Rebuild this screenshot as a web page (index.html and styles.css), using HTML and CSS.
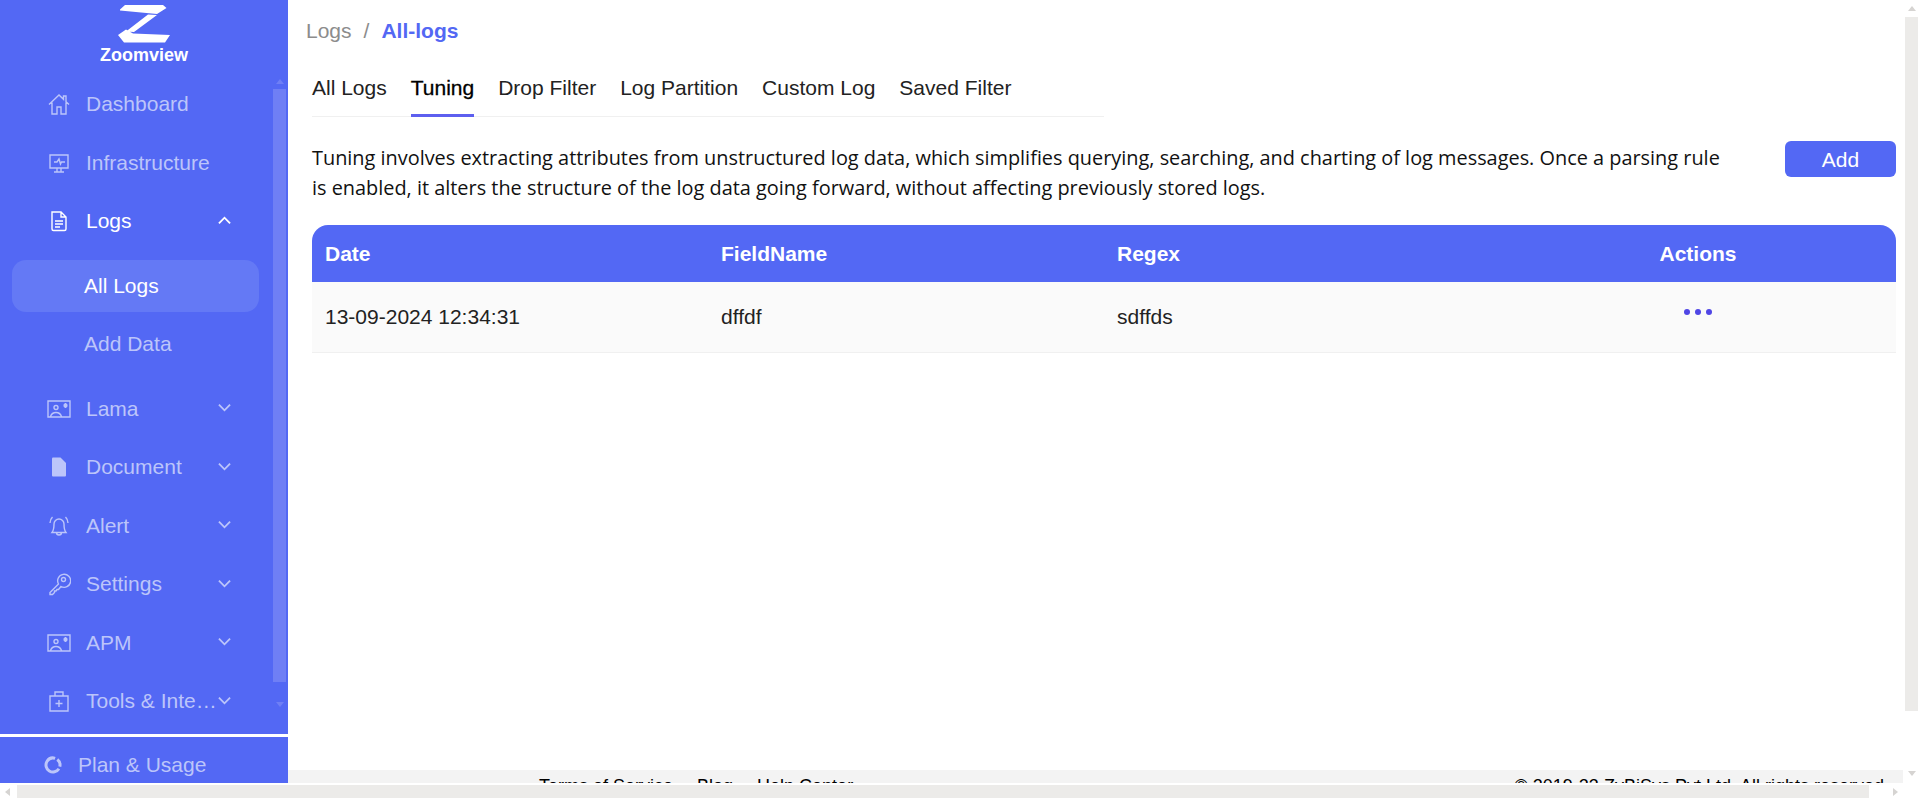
FILE: index.html
```html
<!DOCTYPE html>
<html lang="en">
<head>
  <meta charset="UTF-8">
  <meta name="viewport" content="width=device-width, initial-scale=1.0">
  <link rel="stylesheet" href="styles.css">
  <title>Zoomview - Logs</title>
</head>
<body>
  <div class="window">
    <div class="page">
      <aside class="sidebar">
        <div class="logo">
          <svg class="logo-mark" width="52" height="39" viewBox="118 4 52 39"><path d="M120 9.500L125 5H163L166.500 8L157 14L120 10.500Z M148 14.500L157 15L134 32L126 31.500Z M118 35L126 29.500L133 33.500L170 35L165 42.500H124Z" fill="#fff"/></svg>
          <span class="logo-name">Zoomview</span>
        </div>
        <div class="menu-wrap">
          <nav class="menu">
            <a class="menu-item"><svg class="menu-icon" viewBox="0 0 24 24"><path d="M2 12.500L12 3l4.500 4.300V4H19v5.700l3 2.800M5 10.500V22h5v-7h4v7h5V10.500"/></svg><span class="menu-label">Dashboard</span></a>
            <a class="menu-item"><svg class="menu-icon" viewBox="0 0 24 24"><path d="M3 4h18v13H3zM7 11h3l2-3 1.500 5 1-2H18M10 17v4M14 17v4M7 21h10"/></svg><span class="menu-label">Infrastructure</span></a>
            <a class="menu-item open"><svg class="menu-icon" viewBox="0 0 24 24"><path d="M5 3h9l5 5v12a1.500 1.500 0 0 1-1.500 1.500h-11A1.500 1.500 0 0 1 5 20zM14 3v5h5M8 12h8M8 15h8M8 18h5"/></svg><span class="menu-label">Logs</span><svg class="chevron" viewBox="0 0 14 14"><path d="M1 10l6-6 6 6"/></svg></a>
            <a class="sub-item current">All Logs</a>
            <a class="sub-item">Add Data</a>
            <a class="menu-item gap"><svg class="menu-icon" viewBox="0 0 24 24"><path d="M1 4h22v16H1zM3.500 19.500c1-3 3-4 5.500-4s4.500 1 5.500 4M17 7l3 3M20 7l-3 3M18.500 6v5M16.500 8.500h4"/><circle cx="9" cy="10.500" r="2"/></svg><span class="menu-label">Lama</span><svg class="chevron" viewBox="0 0 14 14"><path d="M1 4l6 6 6-6"/></svg></a>
            <a class="menu-item"><svg class="menu-icon solid" viewBox="0 0 24 24"><path d="M6 2.500h7.500L19 8v12.500a1 1 0 0 1-1 1H6a1 1 0 0 1-1-1v-17a1 1 0 0 1 1-1z"/></svg><span class="menu-label">Document</span><svg class="chevron" viewBox="0 0 14 14"><path d="M1 4l6 6 6-6"/></svg></a>
            <a class="menu-item"><svg class="menu-icon" viewBox="0 0 24 24"><path d="M5 18.500c2-2.500 2-5 2-8.500a5 5 0 0 1 10 0c0 3.500 0 6 2 8.500zM9.500 18.500a2.500 2.500 0 0 0 5 0M3 9c0-2.500 1-4.500 2.500-6M21 9c0-2.500-1-4.500-2.500-6"/></svg><span class="menu-label">Alert</span><svg class="chevron" viewBox="0 0 14 14"><path d="M1 4l6 6 6-6"/></svg></a>
            <a class="menu-item"><svg class="menu-icon" viewBox="0 0 24 24"><path d="M11.500 12L3 20.500V22.500H5.500L7.500 20.500V19H9L10 17.500H11.500L14 14.500A6.500 6.500 0 1 0 11.500 12Z"/><circle cx="16.500" cy="7.500" r="2"/></svg><span class="menu-label">Settings</span><svg class="chevron" viewBox="0 0 14 14"><path d="M1 4l6 6 6-6"/></svg></a>
            <a class="menu-item"><svg class="menu-icon" viewBox="0 0 24 24"><path d="M1 4h22v16H1zM3.500 19.500c1-3 3-4 5.500-4s4.500 1 5.500 4M17 7l3 3M20 7l-3 3M18.500 6v5M16.500 8.500h4"/><circle cx="9" cy="10.500" r="2"/></svg><span class="menu-label">APM</span><svg class="chevron" viewBox="0 0 14 14"><path d="M1 4l6 6 6-6"/></svg></a>
            <a class="menu-item"><svg class="menu-icon" viewBox="0 0 24 24"><path d="M3 7h18v15H3zM8 7V3h8v4M12 11v7M8.500 14.500h7"/></svg><span class="menu-label">Tools &amp; Integrations</span><svg class="chevron" viewBox="0 0 14 14"><path d="M1 4l6 6 6-6"/></svg></a>
          </nav>
          <div class="side-track">
            <span class="arrow arrow-up"></span>
            <span class="side-thumb"></span>
            <span class="arrow arrow-down"></span>
          </div>
        </div>
        <a class="plan"><svg class="plan-icon" viewBox="0 0 18 18"><circle cx="9" cy="9" r="7" stroke-dasharray="31 2.500 8 2.500"/></svg>Plan &amp; Usage</a>
      </aside>

      <div class="content">
        <main class="main">
          <div class="breadcrumb"><span>Logs</span><span>/</span><b>All-logs</b></div>
          <div class="tabs">
            <a class="tab">All Logs</a>
            <a class="tab active">Tuning</a>
            <a class="tab">Drop Filter</a>
            <a class="tab">Log Partition</a>
            <a class="tab">Custom Log</a>
            <a class="tab">Saved Filter</a>
          </div>
          <div class="intro">
            <p>Tuning involves extracting attributes from unstructured log data, which simplifies querying, searching, and charting of log messages. Once a parsing rule is enabled, it alters the structure of the log data going forward, without affecting previously stored logs.</p>
            <button class="add-btn">Add</button>
          </div>
          <table class="log-table">
            <thead>
              <tr><th>Date</th><th>FieldName</th><th>Regex</th><th class="col-actions">Actions</th></tr>
            </thead>
            <tbody>
              <tr>
                <td>13-09-2024 12:34:31</td>
                <td>dffdf</td>
                <td>sdffds</td>
                <td class="col-actions"><span class="dots"><i></i><i></i><i></i></span></td>
              </tr>
            </tbody>
          </table>
        </main>
        <footer class="footer">
          <div class="footer-links"><a>Terms of Service</a><a>Blog</a><a>Help Center</a></div>
          <div>© 2019-23 ZyBiSys Pvt Ltd. All rights reserved.</div>
        </footer>
      </div>
    </div>

    <div class="v-track">
      <span class="arrow dark arrow-up"></span>
      <span class="v-thumb"></span>
      <span class="arrow dark arrow-down"></span>
    </div>
    <div class="h-track">
      <span class="arrow dark arrow-left"></span>
      <span class="h-thumb"></span>
      <span class="arrow dark arrow-right"></span>
    </div>
    <div class="corner"></div>
  </div>
</body>
</html>
```
FILE: styles.css
```css
* {
  box-sizing: border-box;
}

html,
body {
  margin: 0;
  height: 100%;
  overflow: hidden;
}

body {
  font-family: "Liberation Sans", Arial, sans-serif;
  font-size: 21px;
  color: #222;
  background-color: #fff;
}

.window {
  display: grid;
  grid-template-columns: 1fr 17px;
  grid-template-rows: 783px 17px;
  height: 800px;
}

.page {
  display: flex;
  min-width: 0;
  overflow: hidden;
}

/* sidebar */

.sidebar {
  display: flex;
  flex-direction: column;
  flex: 0 0 288px;
  width: 288px;
  min-width: 0;
  background-color: #5368f4;
}

.logo {
  display: flex;
  flex-direction: column;
  align-items: center;
  flex: 0 0 75px;
  padding-top: 4px;
  color: #fff;
}

.logo-mark {
  display: block;
}

.logo-name {
  margin-top: 3px;
  font-size: 18px;
  font-weight: bold;
  line-height: 18px;
}

.menu-wrap {
  display: flex;
  flex: 0 0 659px;
  overflow: hidden;
}

.menu {
  flex: 1;
  min-width: 0;
  padding: 0 12px;
}

.menu-item {
  display: flex;
  align-items: center;
  height: 58.5px;
  padding: 0 28px 0 35px;
  color: #bcc5fa;
}

.menu-item.open {
  margin-bottom: 9.5px;
  color: #fff;
}

.menu-item.gap {
  margin-top: 10px;
}

.menu-icon {
  flex: 0 0 24px;
  width: 24px;
  height: 24px;
  margin-right: 15px;
  fill: none;
  stroke: currentColor;
  stroke-width: 1.4;
}

.menu-icon.solid {
  fill: currentColor;
  stroke: none;
}

.menu-label {
  flex: 1;
  min-width: 0;
  overflow: hidden;
  white-space: nowrap;
  text-overflow: ellipsis;
}

.chevron {
  flex: 0 0 13px;
  width: 13px;
  height: 13px;
  margin-top: -2px;
  fill: none;
  stroke: currentColor;
  stroke-width: 2;
}

.sub-item {
  display: flex;
  align-items: center;
  height: 52px;
  margin-bottom: 5.5px;
  padding-left: 72px;
  border-radius: 14px;
  color: #bcc5fa;
}

.sub-item.current {
  background-color: #6479f5;
  color: #fff;
}

.side-track {
  display: flex;
  flex-direction: column;
  align-items: center;
  flex: 0 0 17px;
  padding: 0 2px;
}

.side-thumb {
  flex: 0 0 593px;
  width: 13px;
  background-color: #6f7ff5;
}

.plan {
  display: flex;
  align-items: center;
  flex: 1;
  padding: 10px 0 0 44px;
  border-top: 3px solid #fff;
  color: #bcc5fa;
}

.plan-icon {
  width: 18px;
  height: 18px;
  margin-right: 16px;
  fill: none;
  stroke: currentColor;
  stroke-width: 3;
  transform: rotate(32deg);
}

/* scrollbar arrows */

.arrow {
  flex: none;
  width: 0;
  height: 0;
  border: 4px solid transparent;
}

.arrow-up {
  margin: 4px 0 5px;
  border-top: 0;
  border-bottom: 5px solid #6f7ff5;
}

.arrow-down {
  margin-top: 20px;
  border-bottom: 0;
  border-top: 5px solid #6f7ff5;
}

.arrow.dark.arrow-up {
  margin: 6px 0;
  border-bottom-color: #d6d4d2;
}

.arrow.dark.arrow-down {
  margin-top: 60px;
  border-top-color: #d6d4d2;
}

.arrow-left {
  border-left: 0;
  border-right: 5px solid #d6d4d2;
}

.arrow-right {
  border-right: 0;
  border-left: 5px solid #d6d4d2;
}

/* main column */

.content {
  display: flex;
  flex-direction: column;
  flex: 1;
  min-width: 0;
}

.main {
  flex: 1;
  padding: 0 7px 0 18px;
}

.breadcrumb {
  display: flex;
  align-items: center;
  gap: 12px;
  height: 62px;
  color: #8c8c8c;
}

.breadcrumb b {
  color: #5368f4;
}

.tabs {
  display: flex;
  gap: 24px;
  width: 792px;
  height: 55px;
  margin-left: 6px;
  border-bottom: 1px solid #f0f0f0;
}

.tab {
  display: flex;
  align-items: center;
  height: 55px;
  border-bottom: 3px solid transparent;
  color: #222;
}

.tab.active {
  border-bottom-color: #5d5fef;
  color: #000;
  -webkit-text-stroke: 0.3px #000;
}

.intro {
  display: flex;
  justify-content: space-between;
  align-items: flex-start;
  margin: 24px 0 0 6px;
}

.intro p {
  width: 1420px;
  margin: 0;
  padding-top: 2px;
  font-family: "Open Sans", sans-serif;
  font-size: 19.9px;
  line-height: 30px;
  color: #111;
}

.add-btn {
  width: 111px;
  height: 36px;
  padding: 2px 0 0;
  border: 0;
  border-radius: 6px;
  background-color: #5368f4;
  color: #fff;
  font-family: inherit;
  font-size: 21px;
}

.log-table {
  width: 1584px;
  margin: 22px 0 0 6px;
  border-collapse: separate;
  border-spacing: 0;
  table-layout: fixed;
}

.log-table th {
  height: 57px;
  padding: 0 13px;
  background-color: #5368f4;
  color: #fff;
  text-align: left;
}

.log-table th:first-child {
  border-top-left-radius: 16px;
}

.log-table th:last-child {
  border-top-right-radius: 16px;
}

.log-table td {
  height: 71px;
  padding: 0 13px;
  background-color: #fafafa;
  border-bottom: 1px solid #f0f0f0;
  color: #222;
}

.log-table .col-actions {
  text-align: center;
}

.dots {
  display: inline-flex;
  gap: 5px;
  vertical-align: 9px;
}

.dots i {
  width: 6px;
  height: 6px;
  border-radius: 50%;
  background-color: #4f46e5;
}

.footer {
  display: flex;
  justify-content: space-between;
  flex: 0 0 13px;
  height: 13px;
  padding: 6px 14px 0 251px;
  overflow: hidden;
  background-color: #f3f3f3;
  color: #000;
  font-size: 18px;
}

.footer-links {
  display: flex;
  gap: 24px;
}

/* window scrollbars */

.v-track {
  display: flex;
  flex-direction: column;
  align-items: center;
  padding: 0 2px;
}

.v-thumb {
  flex: 0 0 694px;
  width: 13px;
  background-color: #ecebe9;
}

.h-track {
  display: flex;
  align-items: center;
  padding: 2px 0 2px 5px;
}

.h-thumb {
  flex: 0 0 1852px;
  height: 13px;
  margin: 0 24px 0 7px;
  background-color: #ecebe9;
}
```
